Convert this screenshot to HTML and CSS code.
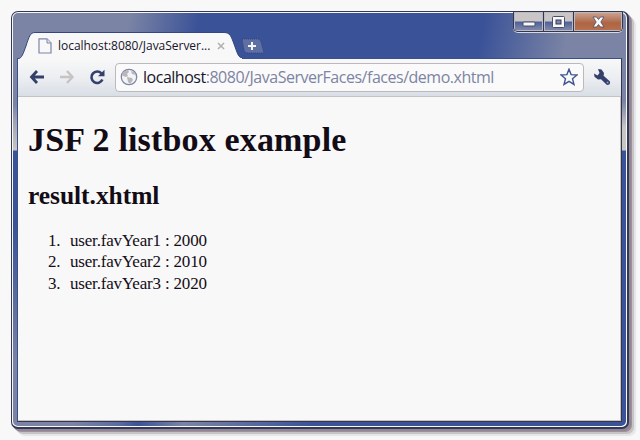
FILE: index.html
```html
<!DOCTYPE html>
<html lang="en">
<head>
<meta charset="utf-8">
<title>JSF 2 listbox example</title>
<link rel="stylesheet" href="styles.css">
</head>
<body>
<div class="window">
  <div class="frame">
    <header class="titlebar">
      <div class="tab">
        <svg class="tab-shape" width="224" height="27" viewBox="0 0 224 27"><path d="M0 27C4 26 5 22 8 14C11 5 12 .5 17 .5H206C212 .5 213 4 216 12C219 20 220 26 224 26V27Z" fill="#f8f8f8"/><path d="M0 27C4 26 5 22 8 14C11 5 12 .5 17 .5H206C212 .5 213 4 216 12C219 20 220 25.5 224 25.5" fill="none" stroke="#344780"/></svg>
        <svg class="page-icon" width="14" height="16" viewBox="0 0 14 16"><path d="M1 .8H9L13 5V15H1Z" fill="#f8f8f8" stroke="#7d86a8" stroke-width="1.2"/><path d="M9 1V5H13" fill="#e8e8ee" stroke="#7d86a8"/></svg>
        <span class="tab-title">localhost:8080/JavaServer...</span>
        <svg class="tab-close" width="8" height="8" viewBox="0 0 8 8"><path d="M1 1L7 7M7 1L1 7" stroke="#b3b0b2" stroke-width="1.6"/></svg>
      </div>
      <svg class="new-tab" width="27" height="17" viewBox="0 0 27 17"><path d="M3 1H19Q21 1 22 4L25 15H8Q6 15 5 12Z" fill="#5e6fa4" stroke="#344372" stroke-dasharray="1 1"/><path d="M13 4V12M9 8H17" stroke="#f4f4f4" stroke-width="2"/></svg>
      <div class="controls">
        <div class="control"><svg width="14" height="6" viewBox="0 0 14 6"><rect x="1" y="1" width="12" height="4" rx="1" fill="#f8f8f8" stroke="#4a4d6b"/></svg></div>
        <div class="control"><svg width="13" height="12" viewBox="0 0 13 12"><rect x=".5" y=".5" width="12" height="11" rx="1" fill="#f8f8f8" stroke="#4a4d6b"/><rect x="4" y="4" width="5" height="4" fill="#7d86a8" stroke="#343957"/></svg></div>
        <div class="control control-close"><svg width="13" height="12" viewBox="0 0 13 12"><path d="M1 1H4.5L6.5 3.5L8.5 1H12L8.8 6L12 11H8.5L6.5 8.5L4.5 11H1L4.2 6Z" fill="#f8f8f8" stroke="#4a4d6b" stroke-width=".8"/></svg></div>
      </div>
    </header>
    <main class="client">
      <nav class="toolbar">
        <svg width="16" height="14" viewBox="0 0 16 14"><path d="M8 1L2.5 7L8 13M3 7H15" fill="none" stroke="#343f6b" stroke-width="2.8"/></svg>
        <svg class="forward" width="16" height="14" viewBox="0 0 16 14"><path d="M8 1L13.5 7L8 13M13 7H1" fill="none" stroke="#c7c3c2" stroke-width="2.4"/></svg>
        <svg class="reload" width="16" height="16" viewBox="0 0 16 16"><path d="M12.4 4.4A5.7 5.7 0 1 0 13.4 10.5" fill="none" stroke="#343f6b" stroke-width="2.6"/><path d="M9 7.2H15.5V.8Z" fill="#343f6b"/></svg>
        <div class="address">
          <svg width="18" height="18" viewBox="0 0 18 18"><circle cx="9" cy="9" r="7.7" fill="#f4f4f5" stroke="#7d86a8" stroke-width="1.3"/><path d="M3 4L8 2L9 4L7 6L8 8L6 9L3 8L2 6ZM11 3L14 4L15.5 7L12 6ZM7 9L12 10L13 12L10 16L8 14Z" fill="#b9b7bb"/></svg>
          <span class="url"><b>localhost</b>:8080/JavaServerFaces/faces/demo.xhtml</span>
          <svg class="star" width="18" height="18" viewBox="0 0 18 18"><path d="M9 1.2L11.1 6.6L17 7L12.5 10.7L14 16.4L9 13.3L4 16.4L5.5 10.7L1 7L6.9 6.6Z" fill="#fafafa" stroke="#3f5492" stroke-width="1.4"/></svg>
        </div>
        <svg class="wrench" width="18" height="18" viewBox="0 0 18 18"><path d="M5 1L8.5 1.5L11 5L10.6 7.7L17 13.5Q17.6 17 14 17L8 11.2L5 11.4L1.5 8.7L1 5.5L4.5 7.5L6.5 5Z" fill="#343f6b"/><circle cx="14.6" cy="14.6" r="1" fill="#8f9bbd"/></svg>
      </nav>
      <article class="page">
        <h1>JSF 2 listbox example</h1>
        <h2>result.xhtml</h2>
        <ol>
          <li>user.favYear1 : 2000</li>
          <li>user.favYear2 : 2010</li>
          <li>user.favYear3 : 2020</li>
        </ol>
      </article>
    </main>
  </div>
</div>
</body>
</html>
```
FILE: styles.css
```css
* { box-sizing: border-box; }
body {
  margin: 0;
  width: 640px;
  height: 440px;
  padding: 11px 0 0 11px;
  background: #f8f8f8;
  overflow: hidden;
}
svg { display: block; flex: none; }
.window {
  width: 618px;
  height: 418px;
  border: solid #343850;
  border-width: 1px 2px 2px 1px;
  border-radius: 7px;
  background: #f8f8f8;
  padding: 1px;
  box-shadow: 2px 2px 0 #8a86a0, 3px 3px 0 #a88f8d, 5px 5px 0 #c8c4c4, 7px 7px 1px #e2e5e9;
}
.frame {
  height: 100%;
  display: flex;
  flex-direction: column;
  padding: 0 4px 4px;
  border-radius: 5px;
  background:
    linear-gradient(#7b84a5 0 92px, #a2a6b4 110px, #c8c6c5 137px, #3a5298 138px 210px, #4f629c 260px, #7b84a5 350px) 0 0 / 5px 100% no-repeat,
    linear-gradient(#7b84a5 0 88px, #c8c6c5 115px 137px, #3a5298 138px) 100% 0 / 6px 100% no-repeat,
    linear-gradient(90deg, #7b84a5 0 60px, #5c6ca0 105px, #3a5298 125px, #7b84a5 170px, #3a5298 300px) 0 100% / 100% 6px no-repeat,
    linear-gradient(100deg, #7b84a5 0 115px, #3a5298 185px 465px, #7b84a5 550px);
}
.titlebar {
  height: 45px;
  flex: none;
  display: flex;
  align-items: flex-start;
}
.tab {
  position: relative;
  width: 224px;
  height: 27px;
  margin: 19px 0 0 1px;
  display: flex;
  align-items: center;
}
.tab-shape { position: absolute; left: 0; top: 0; }
.page-icon { position: relative; margin: 0 6px 0 20px; }
.tab-title {
  position: relative;
  width: 153px;
  white-space: nowrap;
  font: 12px/18px "Open Sans", sans-serif;
  letter-spacing: -0.03px;
  color: #17142b;
}
.tab-close { position: relative; margin-left: 6px; }
.new-tab { margin: 25px 0 0 -3px; }
.controls {
  display: flex;
  width: 110px;
  height: 20px;
  margin: -1px -1px 0 auto;
  border: 1px solid #34374f;
  border-top: 0;
  border-radius: 0 0 5px 5px;
  box-shadow: 0 1px 0 #d9dae0;
  overflow: hidden;
}
.control {
  width: 30px;
  display: flex;
  align-items: center;
  justify-content: center;
  border-right: 1px solid #34374f;
  box-shadow: inset 0 0 0 1px #b9bac5;
  background: linear-gradient(#c9c6c5 0 9px, #4c609b 10px, #7b84a5 17px);
}
.control:first-child { padding-top: 5px; }
.control-close {
  flex: 1;
  border-right: 0;
  background: linear-gradient(#d2a48f 0, #bb846b 6px, #ae6543 11px, #b8704d);
}
.client {
  flex: 1;
  display: flex;
  flex-direction: column;
  border: 1px solid #3b4f8b;
  border-right-color: #34374f;
  border-bottom-color: #34374f;
  box-shadow: inset -1px -1px 0 #c8c2be;
  background: #f8f8f8;
}
.toolbar {
  height: 38px;
  flex: none;
  display: flex;
  align-items: center;
  padding: 0 10px 1px 11px;
  border-bottom: 1px solid #c4c2c3;
  background: linear-gradient(#f8f8f8, #eceef1 50%, #d9dee6);
}
.forward { margin-left: 14px; }
.reload { margin-left: 14px; }
.address {
  display: flex;
  align-items: center;
  width: 469px;
  height: 29px;
  margin-left: 10px;
  padding: 0 5px 0 4px;
  border: 1px solid #bbb9bc;
  border-radius: 4px;
  background: #fafafa;
}
.url {
  flex: 1;
  margin-left: 5px;
  white-space: nowrap;
  font: 16px/24px "Open Sans", sans-serif;
  letter-spacing: -0.48px;
  color: #7d84a2;
}
.url b { font-weight: 400; color: #17142b; }
.wrench { margin-left: 9px; }
.page {
  padding: 23px 10px 0;
  font: 17px/21.3px "Liberation Serif", serif;
  color: #130c16;
}
.page h1 { margin: 0; font-size: 34px; line-height: 40px; letter-spacing: 0.16px; }
.page h2 { margin: 21px 0 0; font-size: 25.5px; line-height: 30px; letter-spacing: -0.05px; }
.page ol {
  margin: 19px 0 0;
  padding: 0 0 0 20px;
  list-style: none;
  counter-reset: year;
}
.page li {
  display: flex;
  counter-increment: year;
  letter-spacing: -0.18px;
}
.page li::before {
  content: counter(year) ".";
  width: 22px;
}
```
